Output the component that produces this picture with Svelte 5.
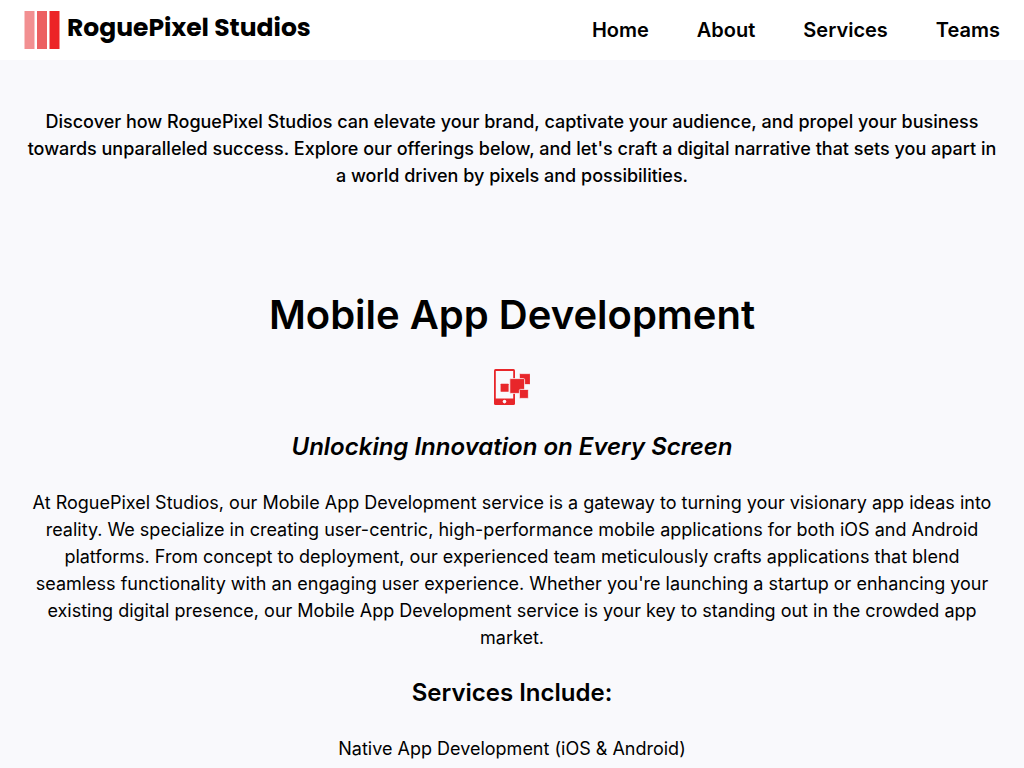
<script>
  const links = ['Home', 'About', 'Services', 'Teams'];
</script>

<header>
  <a class="brand" href="#home">
    <svg width="36" height="38" viewBox="0 0 36 38" aria-hidden="true">
      <rect x="0.5" width="10" height="38" fill="#f28f91" />
      <rect x="13" width="10" height="38" fill="#ec5f61" />
      <rect x="25.5" width="10" height="38" fill="#ec2427" />
    </svg>
    <span>RoguePixel Studios</span>
  </a>
  <nav>
    {#each links as link}
      <a href={'#' + link.toLowerCase()}>{link}</a>
    {/each}
  </nav>
</header>

<main>
  <p class="intro">Discover how RoguePixel Studios can elevate your brand, captivate your audience, and propel your business towards unparalleled success. Explore our offerings below, and let's craft a digital narrative that sets you apart in a world driven by pixels and possibilities.</p>
  <section>
    <h1>Mobile App Development</h1>
    <svg width="36" height="36" viewBox="0 0 36 36" aria-hidden="true">
      <rect width="21" height="36" rx="1.5" fill="#e8262a" />
      <rect x="1.8" y="2" width="17.4" height="27.5" fill="#f9f9fc" />
      <circle cx="10.5" cy="32.6" r="1.8" fill="#f9f9fc" />
      <rect x="6.6" y="14.8" width="8" height="8" rx="0.5" fill="#e8262a" />
      <g fill="#e8262a" stroke="#f9f9fc" stroke-width="0.8">
        <rect x="25.4" y="4.6" width="11" height="11" rx="1" />
        <rect x="15.8" y="9.6" width="14.8" height="14.8" rx="1" />
        <rect x="25.4" y="20.4" width="9" height="9" rx="1" />
      </g>
    </svg>
    <h2 class="tagline">Unlocking Innovation on Every Screen</h2>
    <p>At RoguePixel Studios, our Mobile App Development service is a gateway to turning your visionary app ideas into reality. We specialize in creating user-centric, high-performance mobile applications for both iOS and Android platforms. From concept to deployment, our experienced team meticulously crafts applications that blend seamless functionality with an engaging user experience. Whether you're launching a startup or enhancing your existing digital presence, our Mobile App Development service is your key to standing out in the crowded app market.</p>
    <h2>Services Include:</h2>
    <p>Native App Development (iOS &amp; Android)</p>
  </section>
</main>

<style>
  :global(body) { margin: 0; background: #f9f9fc; color: #000; font-family: Inter, sans-serif; }
  header { display: flex; justify-content: space-between; align-items: center; height: 60px; padding: 0 24px; background: #fff; }
  a { color: inherit; text-decoration: none; }
  .brand { display: flex; align-items: center; gap: 7px; font-family: Poppins, Inter, sans-serif; font-size: 25px; font-weight: 700; }
  .brand span { padding-bottom: 4px; }
  nav { display: flex; gap: 48px; font-size: 20px; font-weight: 600; }
  main { padding: 48px 24px 0; text-align: center; font-size: 18px; line-height: 27px; }
  p { margin: 0; }
  .intro { font-weight: 500; }
  section { display: flex; flex-direction: column; align-items: center; gap: 24px; padding-top: 96px; }
  h1 { margin: 0; font-size: 40px; line-height: 60px; font-weight: 600; }
  h2 { margin: 0; font-size: 24px; line-height: 36px; font-weight: 600; }
  .tagline { font-style: italic; }
</style>
